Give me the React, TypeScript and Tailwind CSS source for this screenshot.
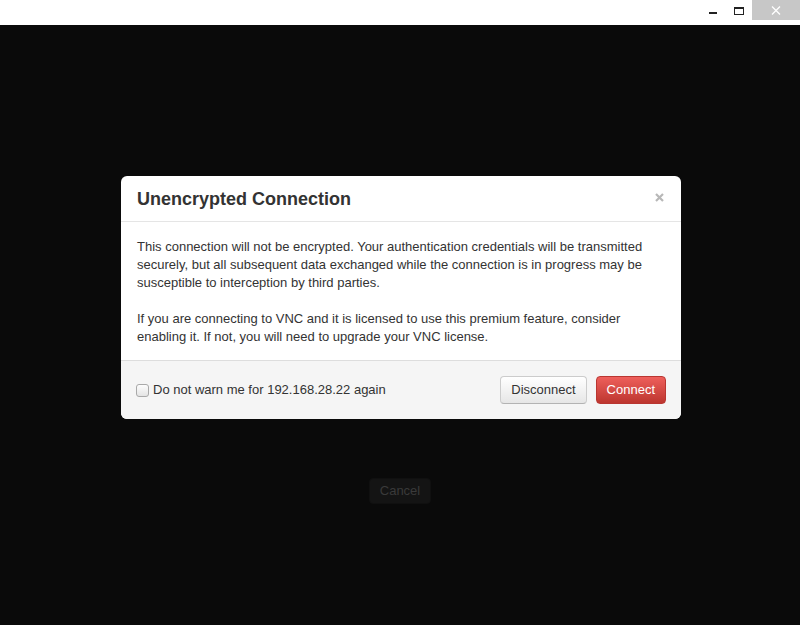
import React from "react";

export default function App() {
  const font = { fontFamily: '"Liberation Sans", Arial, sans-serif' };
  return (
    <div className="w-[800px] h-[625px] flex flex-col bg-black relative overflow-hidden" style={font}>
      {/* window title bar */}
      <div className="h-[25px] bg-white flex justify-end items-start shrink-0">
        <div className="w-[26px] h-[20px] flex items-center justify-center">
          <div className="w-[8px] h-[2px] bg-[#222] mt-[6px]" />
        </div>
        <div className="w-[26px] h-[20px] flex items-center justify-center">
          <div className="w-[10px] h-[8px] border border-[#222] border-t-2 mt-[1px]" />
        </div>
        <div className="w-[48px] h-[20px] bg-[#c7c7c7] flex items-center justify-center">
          <svg width="10" height="9" viewBox="0 0 10 9">
            <path d="M1 0.5 L9 8.5 M9 0.5 L1 8.5" stroke="#fff" strokeWidth="1.3" />
          </svg>
        </div>
      </div>

      {/* underlying page content */}
      <div className="flex-1 bg-[#0a0a0a] flex flex-col items-center pt-[453px]">
        <div className="w-[62px] h-[26px] rounded-[4px] bg-[#141414] border border-[#101010] text-[#3a3a3a] text-[13px] flex items-center justify-center">
          Cancel
        </div>
      </div>

      {/* modal */}
      <div className="absolute left-[121px] top-[176px] w-[560px] bg-white rounded-[6px] overflow-hidden">
        <div className="h-[46px] border-b border-[#e5e5e5] flex items-center justify-between pl-[16px] pr-[16px]">
          <div className="text-[18px] font-bold text-[#333] leading-[20px]">Unencrypted Connection</div>
          <svg width="9" height="9" viewBox="0 0 9 9" className="mr-[1px] mb-[2px]">
            <path d="M1 1 L8 8 M8 1 L1 8" stroke="#b8b8b8" strokeWidth="2.2" />
          </svg>
        </div>
        <div className="px-[16px] pt-[16px] pb-[14px] text-[13px] leading-[18px] text-[#333]">
          <p>
            This connection will not be encrypted. Your authentication credentials will be transmitted securely, but all
            subsequent data exchanged while the connection is in progress may be susceptible to interception by third
            parties.
          </p>
          <p className="mt-[18px]">
            If you are connecting to VNC and it is licensed to use this premium feature, consider enabling it. If not, you
            will need to upgrade your VNC license.
          </p>
        </div>
        <div className="h-[59px] border-t border-[#dddddd] bg-[#f5f5f5] flex items-center justify-between pl-[15px] pr-[15px]">
          <div className="flex items-center text-[13px] text-[#333]">
            <span className="w-[13px] h-[13px] rounded-[3px] border border-[#a9a9a9] bg-gradient-to-b from-[#fdfdfd] to-[#e4e4e4] mr-[4px] mt-[1px]" />
            <span>Do not warn me for 192.168.28.22 again</span>
          </div>
          <div className="flex items-center gap-[9px]">
            <div className="h-[28px] px-[10px] rounded-[4px] border border-[#cccccc] border-b-[#b3b3b3] bg-gradient-to-b from-[#ffffff] to-[#e6e6e6] text-[13px] text-[#333] flex items-center">
              Disconnect
            </div>
            <div className="h-[28px] px-[10px] rounded-[4px] border border-[#b93631] bg-gradient-to-b from-[#ee5f5b] to-[#bd362f] text-[13px] text-white flex items-center">
              Connect
            </div>
          </div>
        </div>
      </div>
    </div>
  );
}
